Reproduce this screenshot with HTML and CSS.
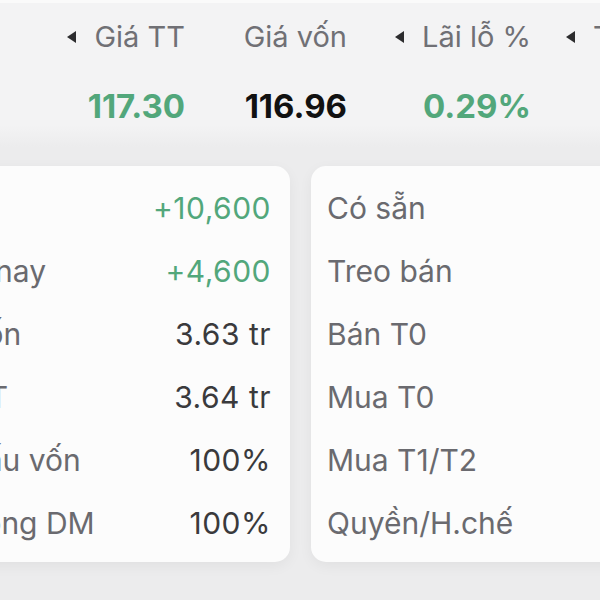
FILE: index.html
```html
<html>
  <head>
    <title>Danh mục</title>
    <meta charset="UTF-8" />
    <meta name="viewport" content="width=device-width, initial-scale=1" />
    <link rel="stylesheet" href="styles.css">
  </head>
  <body>
    <div id="summary">
      <div class="col">
        <div class="head"><span class="arrow"></span>Giá TT</div>
        <div class="val up">117.30</div>
      </div>
      <div class="col col-2">
        <div class="head">Giá vốn</div>
        <div class="val">116.96</div>
      </div>
      <div class="col col-3">
        <div class="head"><span class="arrow"></span>Lãi lỗ %</div>
        <div class="val up">0.29%</div>
      </div>
      <div class="col col-4">
        <div class="head"><span class="arrow"></span>Tỷ trọng</div>
      </div>
    </div>

    <div id="cards">
      <div class="card card-left">
        <div class="row"><span class="label">Lãi lỗ</span><span class="num up">+10,600</span></div>
        <div class="row"><span class="label">Hôm nay</span><span class="num up">+4,600</span></div>
        <div class="row"><span class="label">GT vốn</span><span class="num">3.63 tr</span></div>
        <div class="row"><span class="label">GT TT</span><span class="num">3.64 tr</span></div>
        <div class="row"><span class="label">Cơ cấu vốn</span><span class="num">100%</span></div>
        <div class="row"><span class="label">Tỷ trọng DM</span><span class="num">100%</span></div>
      </div>
      <div class="card card-right">
        <div class="row"><span class="label">Có sẵn</span></div>
        <div class="row"><span class="label">Treo bán</span></div>
        <div class="row"><span class="label">Bán T0</span></div>
        <div class="row"><span class="label">Mua T0</span></div>
        <div class="row"><span class="label">Mua T1/T2</span></div>
        <div class="row"><span class="label">Quyền/H.chế</span></div>
      </div>
    </div>
  </body>
</html>
```

FILE: styles.css
```css
body {
  margin: 0;
  width: 600px;
  height: 600px;
  overflow: hidden;
  font-family: Inter, "Noto Sans", sans-serif;
  background-color: #ececed;
}

#summary {
  display: flex;
  height: 147px;
  padding-top: 17px;
  background: linear-gradient(#f3f3f4 85%, #ececed);
  border-top: 3px solid #fafafa;
  box-sizing: border-box;
  white-space: nowrap;
}

.col {
  display: flex;
  flex-direction: column;
  align-items: flex-end;
  width: 185px;
  flex-shrink: 0;
}

.col-2 {
  width: 162px;
}

.col-3 {
  width: 184px;
}

.col-4 {
  width: 200px;
  align-items: flex-start;
  padding-left: 35px;
}

.head {
  display: flex;
  align-items: center;
  font-size: 29px;
  line-height: 34px;
  color: #707075;
}

.arrow {
  width: 0;
  height: 0;
  border-top: 6px solid transparent;
  border-bottom: 6px solid transparent;
  border-right: 9px solid #2c2c2e;
  margin-right: 18px;
  margin-top: -1px;
}

.val {
  margin-top: 32px;
  font-size: 33px;
  line-height: 40px;
  font-weight: 700;
  color: #111;
}

.up {
  color: #52a77b;
}

#cards {
  display: flex;
  gap: 21px;
  margin-left: -100px;
  margin-top: 19px;
}

.card {
  flex-shrink: 0;
  width: 390px;
  height: 396px;
  box-sizing: border-box;
  padding: 11px 19px 8px 20px;
  background-color: #fcfcfc;
  border-radius: 15px;
  box-shadow: 0px 4px 14px rgba(0, 0, 0, 0.05);
}

.card-right {
  padding-left: 16px;
}

.row {
  display: flex;
  justify-content: space-between;
  font-size: 30px;
  line-height: 63px;
  white-space: nowrap;
}

.label {
  color: #6a6a6f;
}

.num {
  color: #3a3a3c;
  letter-spacing: 0.5px;
}

.num.up {
  color: #52a77b;
}
```
